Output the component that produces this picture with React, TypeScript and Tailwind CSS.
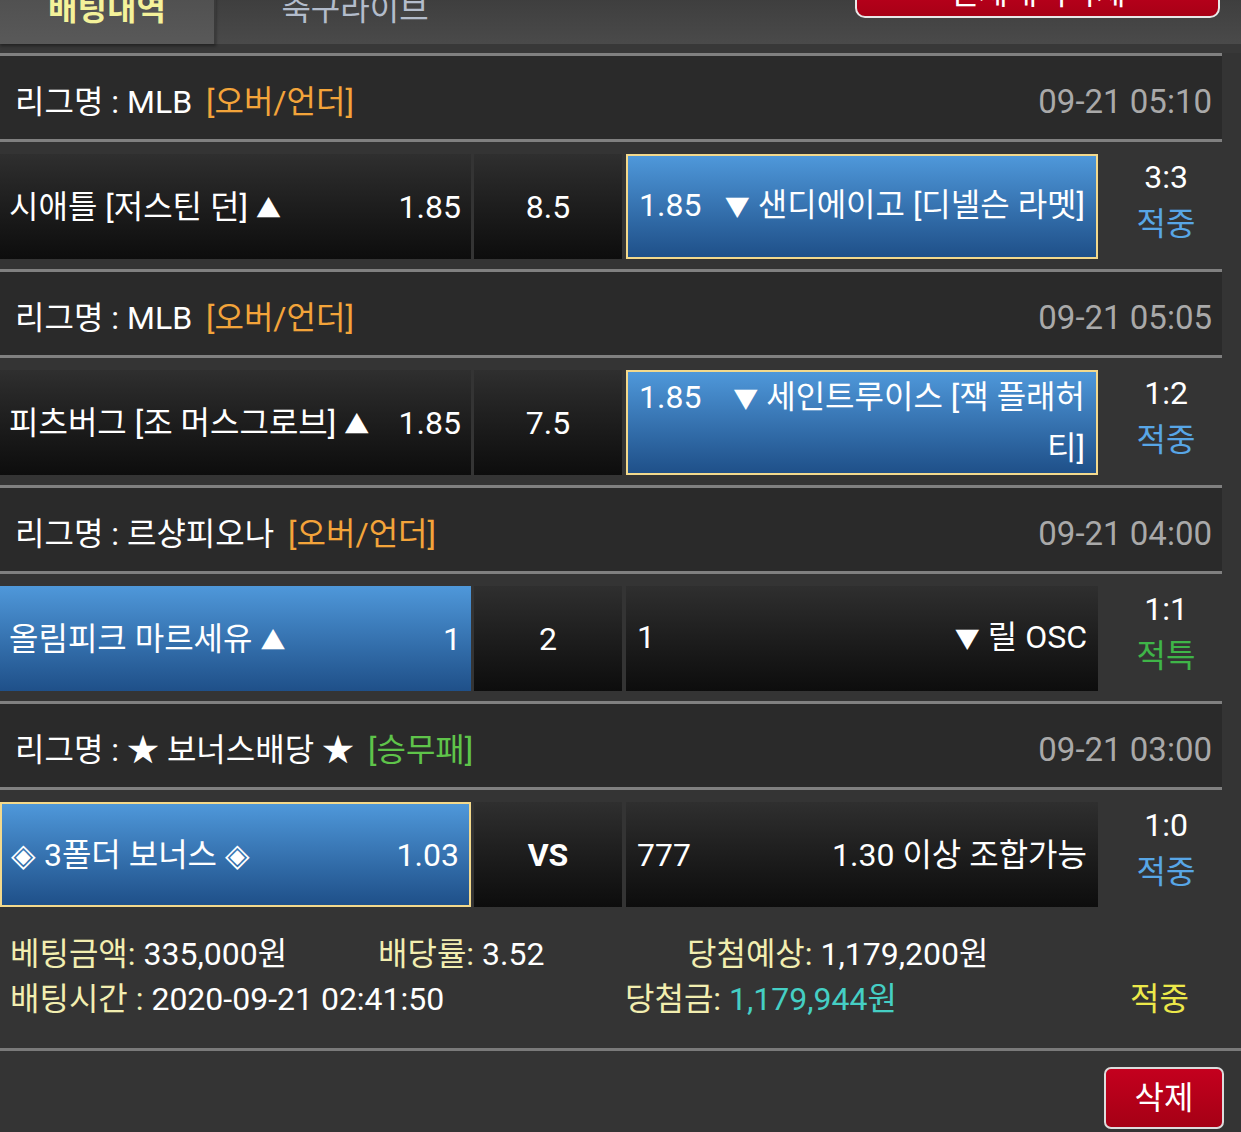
type Tone = "dark" | "blue" | "blueBorder";

type Bet = {
  league: string;
  kind: string;
  kindColor: string;
  time: string;
  home: string;
  homeOdds: string;
  homeTone: Tone;
  mid: string;
  midBold?: boolean;
  awayOdds: string;
  away: string;
  awayTone: Tone;
  score: string;
  result: string;
  resultColor: string;
};

const bets: Bet[] = [
  {
    league: "MLB",
    kind: "[오버/언더]",
    kindColor: "text-[#f3a43a]",
    time: "09-21 05:10",
    home: "시애틀 [저스틴 던] ▲",
    homeOdds: "1.85",
    homeTone: "dark",
    mid: "8.5",
    awayOdds: "1.85",
    away: "▼ 샌디에이고 [디넬슨 라멧]",
    awayTone: "blueBorder",
    score: "3:3",
    result: "적중",
    resultColor: "text-[#58a6e6]",
  },
  {
    league: "MLB",
    kind: "[오버/언더]",
    kindColor: "text-[#f3a43a]",
    time: "09-21 05:05",
    home: "피츠버그 [조 머스그로브] ▲",
    homeOdds: "1.85",
    homeTone: "dark",
    mid: "7.5",
    awayOdds: "1.85",
    away: "▼ 세인트루이스 [잭 플래허티]",
    awayTone: "blueBorder",
    score: "1:2",
    result: "적중",
    resultColor: "text-[#58a6e6]",
  },
  {
    league: "르샹피오나",
    kind: "[오버/언더]",
    kindColor: "text-[#f3a43a]",
    time: "09-21 04:00",
    home: "올림피크 마르세유 ▲",
    homeOdds: "1",
    homeTone: "blue",
    mid: "2",
    awayOdds: "1",
    away: "▼ 릴 OSC",
    awayTone: "dark",
    score: "1:1",
    result: "적특",
    resultColor: "text-[#3fb548]",
  },
  {
    league: "★ 보너스배당 ★",
    kind: "[승무패]",
    kindColor: "text-[#5fc44a]",
    time: "09-21 03:00",
    home: "◈ 3폴더 보너스 ◈",
    homeOdds: "1.03",
    homeTone: "blueBorder",
    mid: "VS",
    midBold: true,
    awayOdds: "777",
    away: "1.30 이상 조합가능",
    awayTone: "dark",
    score: "1:0",
    result: "적중",
    resultColor: "text-[#58a6e6]",
  },
];

function toneClass(tone: Tone) {
  if (tone === "blue") return "bg-linear-to-b from-[#4f98da] to-[#1f5089]";
  if (tone === "blueBorder")
    return "bg-linear-to-b from-[#4f98da] to-[#1f5089] border-2 border-[#f3d98c]";
  return "bg-linear-to-b from-[#2f2f2f] to-[#0d0d0d]";
}

// triangles come out too big in the fallback font, shrink them
function Txt({ s }: { s: string }) {
  const parts = s.split(/([▲▼])/);
  return (
    <>
      {parts.map((p, i) =>
        p === "▲" || p === "▼" ? (
          <span key={i} className="text-[25px]">
            {p}
          </span>
        ) : (
          <span key={i}>{p}</span>
        )
      )}
    </>
  );
}

function BetBlock({ bet }: { bet: Bet }) {
  return (
    <div>
      <div className="h-[3px] bg-[#808080]" />
      <div className="h-[83px] bg-[#2a2a2a] flex items-center justify-between pt-[8px] pl-[15px] pr-[10px]">
        <div className="text-white">
          리그명 : {bet.league} <span className={`ml-[6px] ${bet.kindColor}`}>{bet.kind}</span>
        </div>
        <div className="text-[#a9a9a9] text-[33px]">{bet.time}</div>
      </div>
      <div className="h-[3px] bg-[#808080]" />
      <div className="h-[127px] pt-[12px] pb-[10px] flex">
        <div
          className={`w-[471px] shrink-0 flex items-center justify-between pl-[9px] pr-[10px] text-white ${toneClass(
            bet.homeTone
          )}`}
        >
          <span>
            <Txt s={bet.home} />
          </span>
          <span>{bet.homeOdds}</span>
        </div>
        <div
          className={`ml-[3px] w-[148px] shrink-0 flex items-center justify-center text-white ${
            bet.midBold ? "font-bold" : ""
          } ${toneClass("dark")}`}
        >
          {bet.mid}
        </div>
        <div
          className={`ml-[4px] w-[472px] shrink-0 flex items-center px-[11px] text-white ${toneClass(
            bet.awayTone
          )}`}
        >
          <div className="w-full text-right leading-[48px]">
            <span className="float-left">{bet.awayOdds}</span>
            <Txt s={bet.away} />
          </div>
        </div>
        <div className="flex-1 flex flex-col items-center justify-center pl-[12px] leading-[47px] pb-[12px]">
          <span className="text-white">{bet.score}</span>
          <span className={bet.resultColor}>{bet.result}</span>
        </div>
      </div>
    </div>
  );
}

export default function App() {
  return (
    <div className="min-h-[1132px] bg-[#343434] text-[32px] font-[Roboto,'Noto_Sans_CJK_KR',sans-serif] overflow-hidden">
      {/* tab bar, scrolled up a little */}
      <div className="-mt-[26px] h-[70px] flex items-stretch bg-linear-to-b from-[#383838] to-[#4a4a4a]">
        <div className="w-[216px] flex items-center justify-center bg-linear-to-b from-[#4c4c4c] to-[#595959] border-r-2 border-[#3a3a3a] shadow-[0_2px_3px_rgba(0,0,0,0.4)] font-bold text-[#f4f29a]">
          배팅내역
        </div>
        <div className="w-[278px] flex items-center justify-center text-[#b3bccb]">축구라이브</div>
        <div className="flex-1" />
        <div className="mr-[21px] w-[365px] h-[44px] pb-[6px] flex items-center justify-center rounded-b-[10px] border-2 border-[#e8e8e8] bg-linear-to-b from-[#c5001f] to-[#a80016] text-white">
          전체내역삭제
        </div>
      </div>
      <div className="h-[9px] bg-[#383838]" />

      <div className="mr-[19px]">
        {bets.map((b, i) => (
          <BetBlock key={i} bet={b} />
        ))}
      </div>

      <div className="pt-[15px] pb-[26px] pl-[10px] leading-[45px] text-white">
        <div className="flex">
          <div className="w-[368px]">
            <span className="text-[#f2eeb0]">베팅금액:</span> 335,000원
          </div>
          <div className="w-[309px]">
            <span className="text-[#f2eeb0]">배당률:</span> 3.52
          </div>
          <div>
            <span className="text-[#f2eeb0]">당첨예상:</span> 1,179,200원
          </div>
        </div>
        <div className="flex">
          <div className="w-[615px]">
            <span className="text-[#f2eeb0]">배팅시간 :</span> 2020-09-21 02:41:50
          </div>
          <div className="w-[505px]">
            <span className="text-[#f2eeb0]">당첨금:</span>{" "}
            <span className="text-[#45cfc4]">1,179,944원</span>
          </div>
          <div className="text-[#ece84a]">적중</div>
        </div>
      </div>
      <div className="h-[3px] bg-[#7a7a7a]" />
      <div className="flex justify-end pt-[16px] pr-[17px]">
        <button className="w-[120px] h-[62px] rounded-[7px] border-2 border-[#dcdcdc] bg-linear-to-b from-[#c4001e] to-[#a50015] text-white text-[32px]">
          삭제
        </button>
      </div>
    </div>
  );
}
